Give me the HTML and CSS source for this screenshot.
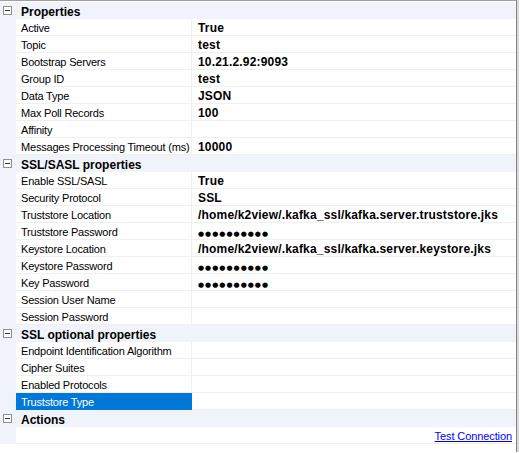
FILE: index.html
```html
<!DOCTYPE html>
<html>
<head>
<meta charset="utf-8">
<link rel="stylesheet" href="styles.css">
</head>
<body>
<div class="grid">
  <div class="cat"><span class="tog"></span><span class="cat-name">Properties</span></div>
  <div class="row"><span class="m"></span><span class="n">Active</span><span class="v">True</span></div>
  <div class="row"><span class="m"></span><span class="n">Topic</span><span class="v">test</span></div>
  <div class="row"><span class="m"></span><span class="n">Bootstrap Servers</span><span class="v">10.21.2.92:9093</span></div>
  <div class="row"><span class="m"></span><span class="n">Group ID</span><span class="v">test</span></div>
  <div class="row"><span class="m"></span><span class="n">Data Type</span><span class="v">JSON</span></div>
  <div class="row"><span class="m"></span><span class="n">Max Poll Records</span><span class="v">100</span></div>
  <div class="row"><span class="m"></span><span class="n">Affinity</span><span class="v"></span></div>
  <div class="row"><span class="m"></span><span class="n">Messages Processing Timeout (ms)</span><span class="v">10000</span></div>
  <div class="cat"><span class="tog"></span><span class="cat-name">SSL/SASL properties</span></div>
  <div class="row"><span class="m"></span><span class="n">Enable SSL/SASL</span><span class="v">True</span></div>
  <div class="row"><span class="m"></span><span class="n">Security Protocol</span><span class="v">SSL</span></div>
  <div class="row"><span class="m"></span><span class="n">Truststore Location</span><span class="v">/home/k2view/.kafka_ssl/kafka.server.truststore.jks</span></div>
  <div class="row"><span class="m"></span><span class="n">Truststore Password</span><span class="v"><span class="dots">●●●●●●●●●●</span></span></div>
  <div class="row"><span class="m"></span><span class="n">Keystore Location</span><span class="v">/home/k2view/.kafka_ssl/kafka.server.keystore.jks</span></div>
  <div class="row"><span class="m"></span><span class="n">Keystore Password</span><span class="v"><span class="dots">●●●●●●●●●●</span></span></div>
  <div class="row"><span class="m"></span><span class="n">Key Password</span><span class="v"><span class="dots">●●●●●●●●●●</span></span></div>
  <div class="row"><span class="m"></span><span class="n">Session User Name</span><span class="v"></span></div>
  <div class="row"><span class="m"></span><span class="n">Session Password</span><span class="v"></span></div>
  <div class="cat"><span class="tog"></span><span class="cat-name">SSL optional properties</span></div>
  <div class="row"><span class="m"></span><span class="n">Endpoint Identification Algorithm</span><span class="v"></span></div>
  <div class="row"><span class="m"></span><span class="n">Cipher Suites</span><span class="v"></span></div>
  <div class="row"><span class="m"></span><span class="n">Enabled Protocols</span><span class="v"></span></div>
  <div class="row sel"><span class="m"></span><span class="n">Truststore Type</span><span class="v"></span></div>
  <div class="cat"><span class="tog"></span><span class="cat-name">Actions</span></div>
  <div class="row action"><span class="m"></span><span class="act"><a href="#" class="link">Test Connection</a></span></div>
</div>
</body>
</html>
```
FILE: styles.css
```css
html, body {
  margin: 0;
  padding: 0;
  background: #ffffff;
}
body {
  width: 521px;
  height: 453px;
  overflow: hidden;
  font-family: "Liberation Sans", Arial, sans-serif;
  font-size: 11px;
  color: #000;
}
.grid {
  width: 517px;
  height: 452px;
  border-top: 1px solid #a0a0a0;
  border-right: 1px solid #828282;
  box-shadow: 2px 0 0 #d9d9d9;
  padding-top: 1px;
  box-sizing: border-box;
}
.cat {
  height: 17px;
  display: flex;
  align-items: center;
  background: #f0f4fa;
}
.tog {
  width: 7px;
  height: 7px;
  border: 1px solid #8f8f8f;
  margin: 0 8px 0 3px;
  position: relative;
  background: #fff;
  box-sizing: content-box;
}
.tog::after {
  content: "";
  position: absolute;
  left: 1px;
  top: 3px;
  width: 5px;
  height: 1px;
  background: #333;
}
.cat-name {
  font-weight: bold;
  font-size: 12px;
  padding-left: 1px;
  padding-top: 2px;
}
.row {
  height: 17px;
  display: grid;
  grid-template-columns: 16px 176px 1fr;
}
.m {
  background: #f0f4fa;
}
.n {
  padding: 2px 0 0 5px;
  line-height: 14px;
  letter-spacing: -0.2px;
  border-bottom: 1px solid #f0f0f0;
  border-right: 1px solid #f0f0f0;
  white-space: nowrap;
  overflow: hidden;
}
.v {
  padding: 2px 0 0 6px;
  line-height: 14px;
  font-weight: bold;
  font-size: 12px;
  letter-spacing: 0.18px;
  border-bottom: 1px solid #f0f0f0;
  white-space: nowrap;
  overflow: hidden;
}
.dots {
  font-family: "DejaVu Sans", sans-serif;
  font-size: 7px;
  letter-spacing: 1px;
}
.sel .n {
  background: #0078d7;
  color: #fff;
  border-color: #0078d7;
}
.row.action {
  grid-template-columns: 16px 1fr;
}
.act {
  display: flex;
  justify-content: flex-end;
  padding: 2px 4px 0 0;
  line-height: 14px;
  border-bottom: 1px solid #f0f0f0;
}
.link {
  color: #0000ff;
  text-decoration: underline;
  letter-spacing: -0.1px;
}
```
